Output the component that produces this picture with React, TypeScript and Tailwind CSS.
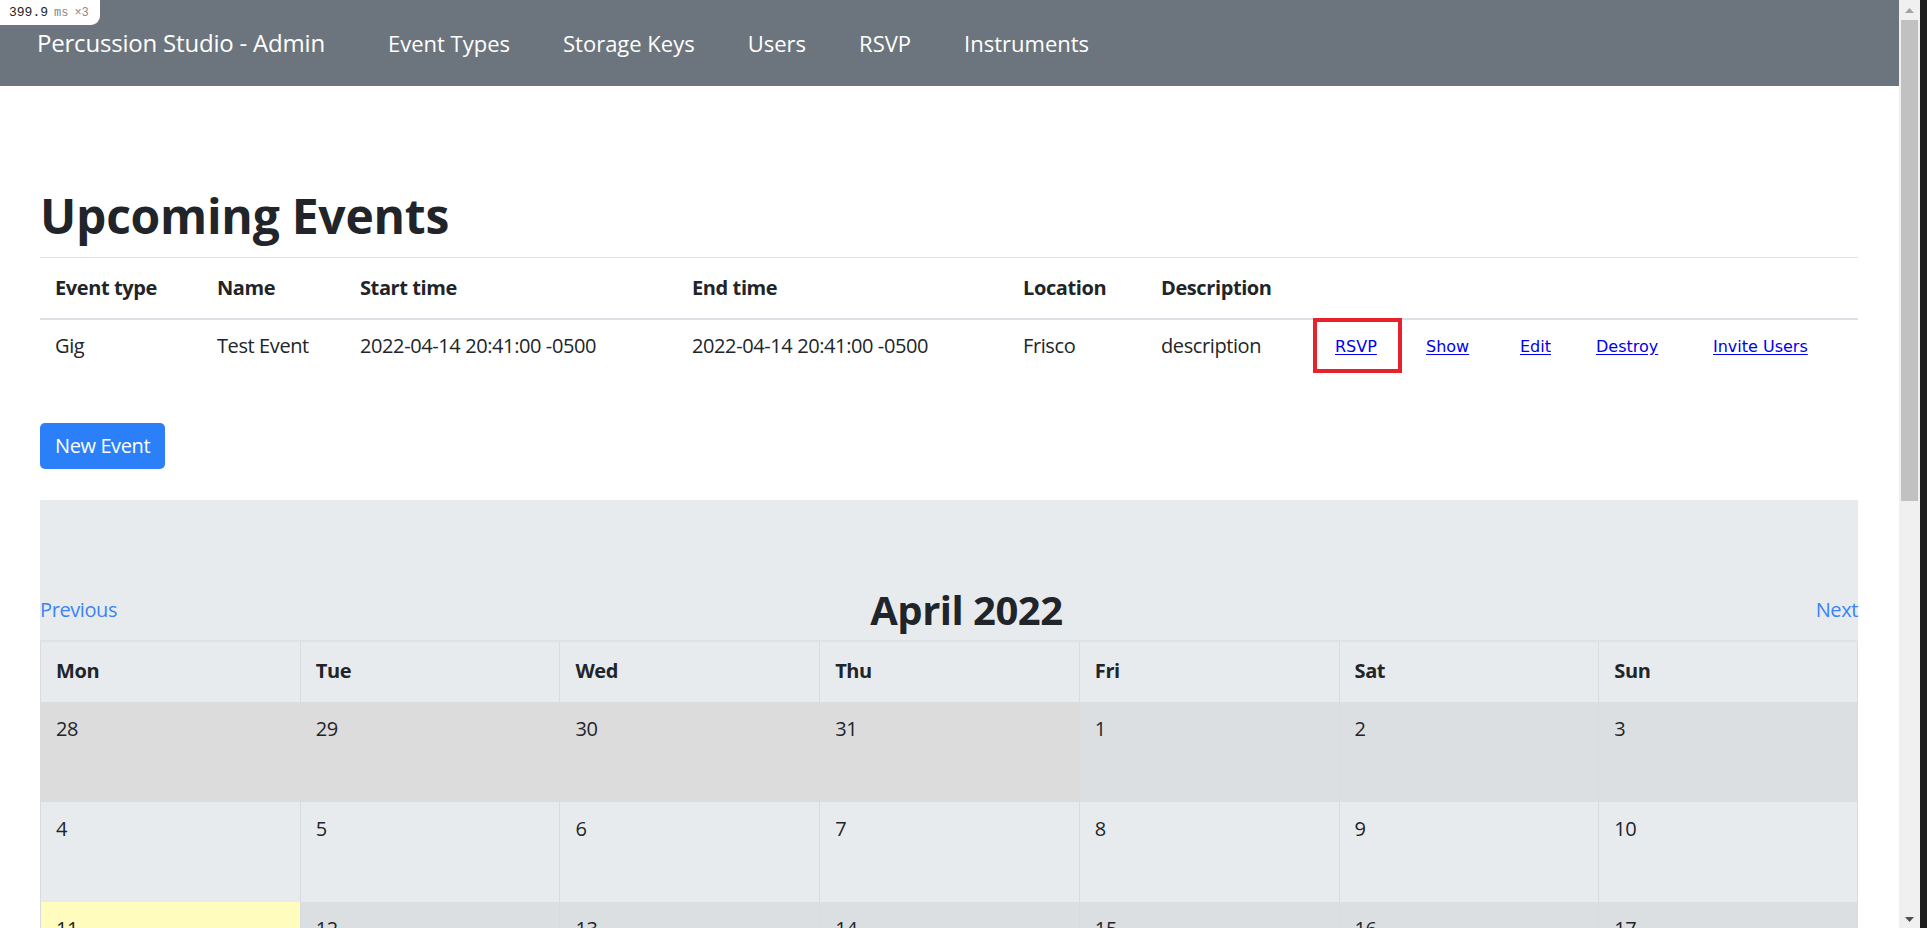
import React from "react";

const navLinks = ["Event Types", "Storage Keys", "Users", "RSVP", "Instruments"];

const columns = [
  { label: "Event type", w: "w-[162px]" },
  { label: "Name", w: "w-[143px]" },
  { label: "Start time", w: "w-[332px]" },
  { label: "End time", w: "w-[331px]" },
  { label: "Location", w: "w-[138px]" },
  { label: "Description", w: "w-[174px]" },
  { label: "", w: "w-[91px]" },
  { label: "", w: "w-[94px]" },
  { label: "", w: "w-[76px]" },
  { label: "", w: "w-[117px]" },
  { label: "", w: "w-[160px]" },
];

const weekDays = ["Mon", "Tue", "Wed", "Thu", "Fri", "Sat", "Sun"];

type Day = { n: number; kind: "prev" | "cur" | "today" | "next" };

const buildWeeks = (): Day[][] => {
  const days: Day[] = [];
  [28, 29, 30, 31].forEach((n) => days.push({ n, kind: "prev" }));
  for (let n = 1; n <= 30; n++) days.push({ n, kind: n === 11 ? "today" : "cur" });
  days.push({ n: 1, kind: "next" });
  const weeks: Day[][] = [];
  for (let i = 0; i < days.length; i += 7) weeks.push(days.slice(i, i + 7));
  return weeks;
};

const dayBg = (d: Day, row: number) => {
  if (d.kind === "today") return "bg-[#fffcbe]";
  if (d.kind === "prev" || d.kind === "next") return "bg-[#dddcdc]";
  return row % 2 === 0 ? "bg-[#dcdfe2]" : "bg-[#e8ebee]";
};

const ActionLink = ({ children }: { children: React.ReactNode }) => (
  <a
    href="#"
    className="relative top-[-1px] font-['DejaVu_Sans',sans-serif] text-[16px] tracking-normal text-[#0000ee] underline underline-offset-2"
  >
    {children}
  </a>
);

const App = () => {
  const weeks = buildWeeks();

  return (
    <div className="relative flex h-[928px] w-full overflow-hidden bg-white font-['Open_Sans',sans-serif] text-[20px] leading-[1.5] tracking-[-0.4px] text-[#212529]">
      {/* timing badge */}
      <div className="absolute left-0 top-0 z-10 flex h-[25px] w-[100px] items-center gap-[6px] rounded-br-[9px] bg-white pl-[9px] font-['Liberation_Mono',monospace] tracking-normal">
        <span className="text-[13px] text-[#222]">399.9</span>
        <span className="text-[12px] text-[#888]">ms</span>
        <span className="text-[12px] text-[#888]">×3</span>
      </div>

      <div className="flex-1 min-w-0">
        <nav className="flex h-[86px] items-center bg-[#6c757d] pl-[37px] text-white tracking-normal">
          <span className="text-[24px] leading-[38px] tracking-[-0.2px]">Percussion Studio - Admin</span>
          <div className="ml-[63px] flex gap-[53px]">
            {navLinks.map((l) => (
              <a key={l} href="#" className="text-[22px]">
                {l}
              </a>
            ))}
          </div>
        </nav>

        <main className="pl-[40px] pr-[41px]">
          <h1 className="mt-[100px] mb-[11px] text-[48px] font-bold leading-[60px] tracking-[-0.25px]">
            Upcoming Events
          </h1>

          <table className="w-full table-fixed border-collapse">
            <colgroup>
              {columns.map((c, i) => (
                <col key={i} className={c.w} />
              ))}
            </colgroup>
            <thead>
              <tr className="border-t border-b-2 border-t-[#dee2e6] border-b-[#dcdfe3]">
                {columns.map((c, i) => (
                  <th key={i} className="px-[15px] pt-[15px] pb-[15px] text-left font-bold">
                    {c.label}
                  </th>
                ))}
              </tr>
            </thead>
            <tbody>
              <tr>
                <td className="px-[15px] pt-[11px] pb-[14px]">Gig</td>
                <td className="px-[15px] pt-[11px] pb-[14px]">Test Event</td>
                <td className="px-[15px] pt-[11px] pb-[14px]">2022-04-14 20:41:00 -0500</td>
                <td className="px-[15px] pt-[11px] pb-[14px]">2022-04-14 20:41:00 -0500</td>
                <td className="px-[15px] pt-[11px] pb-[14px]">Frisco</td>
                <td className="px-[15px] pt-[11px] pb-[14px]">description</td>
                <td className="relative px-[15px] pt-[11px] pb-[14px]">
                  <ActionLink>RSVP</ActionLink>
                  <div className="absolute left-[-7px] top-[-2px] h-[55px] w-[89px] border-4 border-[#e8212b]" />
                </td>
                <td className="px-[15px] pt-[11px] pb-[14px]">
                  <ActionLink>Show</ActionLink>
                </td>
                <td className="px-[15px] pt-[11px] pb-[14px]">
                  <ActionLink>Edit</ActionLink>
                </td>
                <td className="px-[15px] pt-[11px] pb-[14px]">
                  <ActionLink>Destroy</ActionLink>
                </td>
                <td className="px-[15px] pt-[11px] pb-[14px]">
                  <ActionLink>Invite Users</ActionLink>
                </td>
              </tr>
            </tbody>
          </table>

          <button className="mt-[48px] h-[46px] rounded-[5px] bg-[#2b7ff9] px-[15px] text-[20px] text-white">
            New Event
          </button>

          <section className="mt-[31px] bg-[#e8ebee] pt-[86px]">
            <div className="mb-[6px] flex items-center justify-between">
              <a href="#" className="text-[#3b83f6]">
                Previous
              </a>
              <h2 className="text-[40px] font-bold leading-[48px] tracking-[-0.5px]">April 2022</h2>
              <a href="#" className="text-[#3b83f6]">
                Next
              </a>
            </div>

            <div className="border-t-2 border-[#dfe2e5]">
              <div className="grid h-[60px] grid-cols-7">
                {weekDays.map((d, i) => (
                  <div
                    key={d}
                    className={`border-l border-[#dadde0] px-[15px] pt-[14px] font-bold ${i === 6 ? "border-r" : ""}`}
                  >
                    {d}
                  </div>
                ))}
              </div>
              {weeks.map((week, r) => (
                <div key={r} className="grid h-[100px] grid-cols-7">
                  {week.map((d, i) => (
                    <div
                      key={i}
                      className={`border-l border-[#d9dcdf] px-[15px] pt-[12px] ${i === 6 ? "border-r" : ""} ${dayBg(d, r)}`}
                    >
                      {d.n}
                    </div>
                  ))}
                </div>
              ))}
            </div>
          </section>
        </main>
      </div>

      {/* window scrollbar */}
      <div className="relative w-[21px] shrink-0 bg-[#f0f0f0]">
        <svg className="absolute left-[6px] top-[8px]" width="9" height="5" viewBox="0 0 9 5">
          <path d="M4.5 0 L9 5 L0 5 Z" fill="#a3a3a3" />
        </svg>
        <div className="absolute left-[2px] top-[20px] h-[481px] w-[17px] bg-[#c1c1c1]" />
        <svg className="absolute bottom-[6px] left-[6px]" width="9" height="5" viewBox="0 0 9 5">
          <path d="M0 0 L9 0 L4.5 5 Z" fill="#505050" />
        </svg>
      </div>
      <div className="w-[7px] shrink-0 bg-[#1e1e1e]" />
    </div>
  );
};

export default App;
